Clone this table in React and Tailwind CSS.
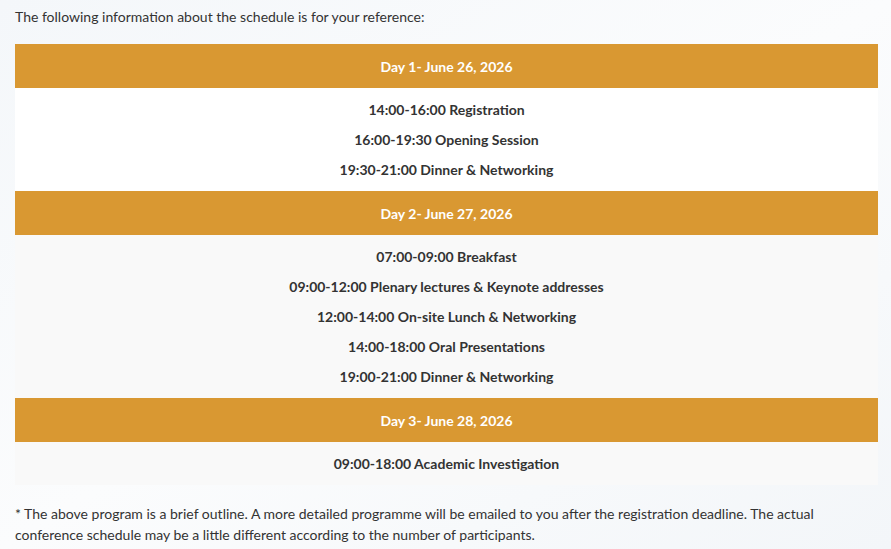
import React from "react";

const days = [
  {
    title: "Day 1- June 26, 2026",
    bg: "bg-white",
    items: ["14:00-16:00 Registration", "16:00-19:30 Opening Session", "19:30-21:00 Dinner & Networking"],
  },
  {
    title: "Day 2- June 27, 2026",
    bg: "bg-[#f9f9f9]",
    items: [
      "07:00-09:00 Breakfast",
      "09:00-12:00 Plenary lectures & Keynote addresses",
      "12:00-14:00 On-site Lunch & Networking",
      "14:00-18:00 Oral Presentations",
      "19:00-21:00 Dinner & Networking",
    ],
  },
  {
    title: "Day 3- June 28, 2026",
    bg: "bg-[#f9f9f9]",
    items: ["09:00-18:00 Academic Investigation"],
  },
];

const App = () => {
  return (
    <div
      className="min-h-[549px] w-full bg-gradient-to-br from-[#f4f7fa] via-[#fbfcfd] to-[#f3f6f9] px-[15px] pt-[6px] text-[14px] text-[#333333]"
      style={{ fontFamily: "Lato, 'Liberation Sans', sans-serif" }}
    >
      <p className="leading-[21px]">The following information about the schedule is for your reference:</p>
      <div className="mt-[17px] w-[863px]">
        {days.map((day) => (
          <div key={day.title}>
            <div className="flex h-[44px] items-center justify-center bg-[#d99832] font-bold text-white">
              {day.title}
            </div>
            <div className={`${day.bg} pt-[7px] pb-[6px] text-center font-bold`}>
              {day.items.map((item) => (
                <div key={item} className="leading-[30px]">
                  {item}
                </div>
              ))}
            </div>
          </div>
        ))}
      </div>
      <p className="mt-[18px] leading-[21px]">
        * The above program is a brief outline. A more detailed programme will be emailed to you after the
        registration deadline. The actual conference schedule may be a little different according to the number of
        participants.
      </p>
    </div>
  );
};

export default App;
